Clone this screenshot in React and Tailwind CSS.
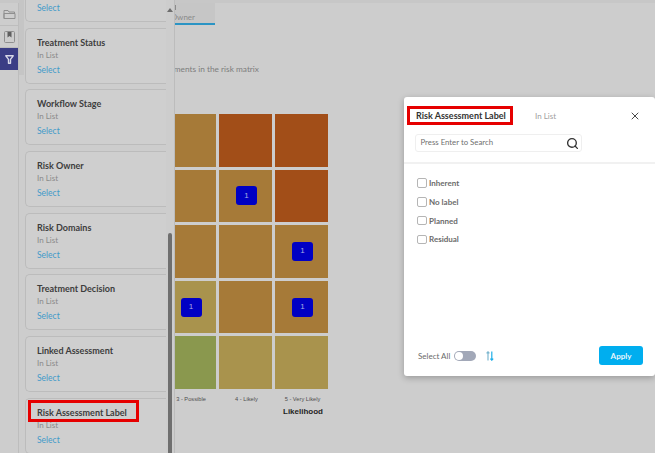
import React from "react";
import { Search, X } from "lucide-react";

const sans = { fontFamily: "'Liberation Sans', sans-serif" };

function FilterCard({ title, highlight }) {
  return (
    <div className="relative h-[56px] shrink-0 rounded-l-[5px] border border-r-0 border-[#bcbcbc] bg-[#cfcfcf] pl-[11.5px] pt-[7px]">
      {highlight && <div className="absolute left-[2px] top-[1px] h-[22px] w-[111px] border-[3px] border-[#e60000]" />}
      <div className="text-[9px] leading-[14px] font-bold text-[#3d3d3d]">{title}</div>
      <div className="-mt-[1px] text-[8px] leading-[12px] text-[#8a8a8a]">In List</div>
      <div className="mt-[3px] text-[8.5px] leading-[13px] text-[#3f9ac9]">Select</div>
    </div>
  );
}

function Cell({ color, badge }) {
  return (
    <div className="flex items-center justify-center pl-[2px]" style={{ background: color }}>
      {badge && (
        <div className="flex h-[19px] w-[21px] items-center justify-center rounded-[3px] bg-[#0000c4] text-[8px] text-[#a9abe2]" style={sans}>
          {badge}
        </div>
      )}
    </div>
  );
}

const A = "#a67a38";
const R = "#a24e18";
const Y = "#a9934d";
const G = "#8a984e";
const grid = [
  [A, null], [R, null], [R, null],
  [A, null], [A, "1"], [R, null],
  [A, null], [A, null], [A, "1"],
  [Y, "1"], [A, null], [A, "1"],
  [G, null], [Y, null], [Y, null],
];

function Rail() {
  return (
    <div className="flex h-full w-[19px] shrink-0 flex-col border-r border-[#bdbdbd] pt-[3px]">
      <div className="flex h-[23px] items-center justify-center border-b border-[#bdbdbd]">
        <svg width="13" height="11" viewBox="0 0 13 11" fill="none" stroke="#8f8f8f" strokeWidth="1">
          <path d="M1 9.5V1.5h4l1 1.5h5.5v1.5" />
          <path d="M1 9.5 1 4.5h11v5z" />
        </svg>
      </div>
      <div className="flex h-[22px] items-center justify-center border-b border-[#bdbdbd]">
        <svg width="11" height="12" viewBox="0 0 11 12" fill="none">
          <rect x="0.5" y="0.5" width="10" height="11" rx="1" stroke="#8f8f8f" />
          <path d="M3.5 1h4v5.5L5.5 5 3.5 6.5z" fill="#5f5f5f" />
        </svg>
      </div>
      <div className="flex h-[22px] items-center justify-center bg-[#3b3d85]">
        <svg width="9" height="9" viewBox="0 0 9 9" fill="none" stroke="#d8d8e8" strokeWidth="1.4" strokeLinejoin="round">
          <path d="M0.8 0.8h7.4L5.5 4.4v3.8h-2V4.4z" />
        </svg>
      </div>
    </div>
  );
}

function FilterPanel() {
  return (
    <div className="relative z-10 flex h-full w-[156px] shrink-0 overflow-hidden border-r border-[#bcbcbc] bg-[#cdcdcd]">
      <div className="absolute top-0 left-0 h-[75px] w-[5px] bg-[#c5c5c5]" />
      <div className="relative flex w-[147px] shrink-0 flex-col gap-[5.67px] pl-[5.5px]">
        <div className="h-[22px] shrink-0 rounded-bl-[5px] border-b border-l border-[#bcbcbc] bg-[#cfcfcf] pl-[11.5px] pt-[1.5px] text-[8.5px] leading-[13px] text-[#3f9ac9]">Select</div>
        {["Treatment Status", "Workflow Stage", "Risk Owner", "Risk Domains", "Treatment Decision", "Linked Assessment"].map((t) => (
          <FilterCard key={t} title={t} />
        ))}
        <FilterCard title="Risk Assessment Label" highlight />
      </div>
      <div className="relative flex-1">
        <div className="absolute left-[1px] top-[8px] h-0 w-0 border-x-[3px] border-b-[4px] border-x-transparent border-b-[#6d6d6d]" />
        <div className="absolute bottom-0 left-[1.5px] h-[220px] w-[4.5px] rounded-t-[2px] bg-[#6f6f6f]" />
      </div>
    </div>
  );
}

function Matrix() {
  return (
    <div className="min-w-0 flex-1">
      <div className="h-[3px] -ml-[175px] w-[655px] bg-[#c7c7c7]" />
      <div className="relative -ml-[25px] flex h-[22px] w-[65px] items-end justify-end border-b-2 border-[#2b94c4] bg-[#c6c6c6] pr-[20px] pb-[1px] text-[8px] leading-[10px] text-[#8b8b8b]">
        <div className="absolute top-[2px] left-[25px] h-[5px] w-px bg-[#8b8b8b]" />
        Risk Owner
      </div>
      <div className="-ml-[75px] mt-[38px] w-[159px] text-right text-[8.3px] leading-[12px] whitespace-nowrap text-[#7d7d7d]">
        Risk assessments in the risk matrix
      </div>
      <div className="-ml-[11px] mt-[39px] grid w-[164px] grid-cols-[52px_53px_53px] grid-rows-[repeat(5,52.6px)] gap-[3px]">
        {grid.map(([c, b], i) => <Cell key={i} color={c} badge={b} />)}
      </div>
      <div className="-ml-[10px] mt-[5px] grid w-[164px] grid-cols-[52px_53px_53px] gap-x-[3px] text-center text-[5.7px] leading-[10px] whitespace-nowrap text-[#4d4d4d]" style={sans}>
        <div>3 - Possible</div>
        <div>4 - Likely</div>
        <div>5 - Very Likely</div>
      </div>
      <div className="ml-[108px] mt-[2px] text-[8px] leading-[12px] font-bold text-[#1f1f1f]" style={sans}>Likelihood</div>
    </div>
  );
}

function Dialog() {
  return (
    <div className="absolute left-[404px] top-[97px] z-20 flex h-[279px] w-[251px] flex-col rounded-[3px] bg-white shadow-[0_2px_6px_rgba(0,0,0,0.25)]">
      <div className="shrink-0 border-b-2 border-[#f1f1f1] pb-[10px]">
        <div className="flex items-center pt-[9px] pr-[14px] pl-[3px]">
          <div className="flex h-[19px] w-[106px] shrink-0 items-center border-[3px] border-[#e60000] pl-[6px] text-[9px] font-bold whitespace-nowrap text-[#333]">Risk Assessment Label</div>
          <div className="ml-[22px] text-[8px] leading-[12px] text-[#a0a0a0]">In List</div>
          <X size={12} strokeWidth={1.8} className="ml-auto text-[#333]" />
        </div>
        <div className="ml-[11px] mt-[9px] flex h-[18px] w-[167px] items-center justify-between rounded-[3px] border border-[#efefef] pr-[2px] pl-[4.5px] text-[7.8px] text-[#6f6f6f]">
          <span>Press Enter to Search</span>
          <Search size={13} strokeWidth={2.5} className="text-[#333]" />
        </div>
      </div>
      <div className="flex flex-col gap-[8.8px] pl-[13px] pt-[14px]">
        {["Inherent", "No label", "Planned", "Residual"].map((t) => (
          <div key={t} className="flex h-[10px] items-center gap-[2.5px] text-[8px] font-bold text-[#6b6b6b]">
            <div className="h-[9.5px] w-[9.5px] rounded-[2px] border border-[#b5b5b5]" />
            <span>{t}</span>
          </div>
        ))}
      </div>
      <div className="mt-auto flex h-[41px] items-center pl-[14px] pr-[12px]">
        <div className="text-[8px] text-[#6a6a6a]">Select All</div>
        <div className="ml-[4px] flex h-[10px] w-[22px] items-center rounded-full bg-[#a2a8b8] pl-[1px]">
          <div className="h-[8px] w-[8px] rounded-full bg-white" />
        </div>
        <svg className="ml-[10px]" width="8" height="10" viewBox="0 0 8 10" fill="none" strokeWidth="1.2">
          <path d="M2 9.5V.8M.6 2.4 2 .8l1.4 1.6" stroke="#7fb8d0" />
          <path d="M5.8.5v8.7M4.4 7.6l1.4 1.6 1.4-1.6" stroke="#1eaee8" />
        </svg>
        <div className="ml-auto flex h-[19px] w-[44px] items-center justify-center rounded-[3px] bg-[#00aeef] text-[8px] font-bold text-[#e8f6fd]">Apply</div>
      </div>
    </div>
  );
}

export default function App() {
  return (
    <div className="relative flex h-[453px] w-[655px] overflow-hidden bg-[#cdcdcd]" style={{ fontFamily: "Lato, sans-serif" }}>
      <Rail />
      <FilterPanel />
      <Matrix />
      <Dialog />
    </div>
  );
}
